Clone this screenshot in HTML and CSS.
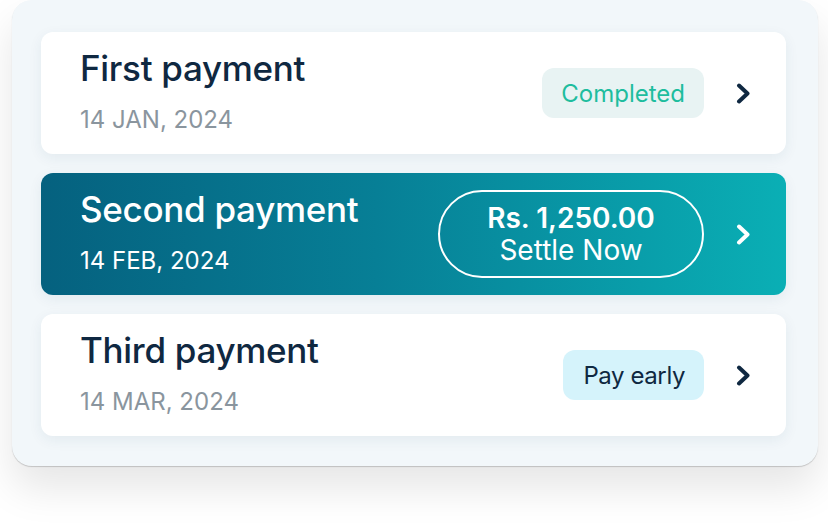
FILE: index.html
```html
<!DOCTYPE html>
<html lang="en">
<head>
<meta charset="utf-8">
<title>Payments</title>
<link rel="stylesheet" href="styles.css">
</head>
<body>
<div class="panel">
  <div class="card">
    <div class="info">
      <div class="title">First payment</div>
      <div class="date">14 JAN, 2024</div>
    </div>
    <div class="actions">
      <span class="badge badge-done">Completed</span>
      <svg class="chev" viewBox="0 0 15 21" width="15" height="21"><path d="M3 2.5l8.5 8-8.5 8" fill="none" stroke="currentColor" stroke-width="4" stroke-linecap="round" stroke-linejoin="round"/></svg>
    </div>
  </div>
  <div class="card card-active">
    <div class="info">
      <div class="title">Second payment</div>
      <div class="date">14 FEB, 2024</div>
    </div>
    <div class="actions">
      <span class="settle"><span class="amount">Rs. 1,250.00</span><span class="settle-label">Settle Now</span></span>
      <svg class="chev" viewBox="0 0 15 21" width="15" height="21"><path d="M3 2.5l8.5 8-8.5 8" fill="none" stroke="currentColor" stroke-width="4" stroke-linecap="round" stroke-linejoin="round"/></svg>
    </div>
  </div>
  <div class="card">
    <div class="info">
      <div class="title">Third payment</div>
      <div class="date">14 MAR, 2024</div>
    </div>
    <div class="actions">
      <span class="badge badge-early">Pay early</span>
      <svg class="chev" viewBox="0 0 15 21" width="15" height="21"><path d="M3 2.5l8.5 8-8.5 8" fill="none" stroke="currentColor" stroke-width="4" stroke-linecap="round" stroke-linejoin="round"/></svg>
    </div>
  </div>
</div>
</body>
</html>
```
FILE: styles.css
```css
html, body {
  margin: 0;
  padding: 0;
  background: #ffffff;
}
body {
  font-family: Inter, "Noto Sans", "Liberation Sans", sans-serif;
  width: 828px;
  height: 524px;
  overflow: hidden;
}
.panel {
  margin-left: 12px;
  width: 806px;
  box-sizing: border-box;
  padding: 32px 32px 30px 29px;
  background: #f2f7fa;
  border-radius: 20px;
  display: flex;
  flex-direction: column;
  gap: 19px;
  box-shadow: 0 1px 1px rgba(0, 0, 0, 0.18), 0 22px 40px rgba(0, 0, 0, 0.10);
}
.card {
  height: 122px;
  background: #ffffff;
  border-radius: 12px;
  display: flex;
  align-items: center;
  justify-content: space-between;
  padding: 0 35px 0 39px;
  box-shadow: 0 4px 14px rgba(30, 70, 100, 0.07);
  color: #0f2841;
}
.card-active {
  background: linear-gradient(90deg, #05617f 0%, #077f96 45%, #0aafb5 100%);
  color: #ffffff;
}
.info {
  display: flex;
  flex-direction: column;
  gap: 16px;
  padding-bottom: 4px;
}
.title {
  font-size: 35px;
  font-weight: 500;
  line-height: 42px;
  letter-spacing: -0.3px;
}
.date {
  font-size: 24px;
  line-height: 30px;
  color: #8a959e;
}
.card-active .date {
  color: #ffffff;
}
.actions {
  display: flex;
  align-items: center;
  gap: 32px;
}
.chev {
  display: block;
}
.badge {
  display: inline-flex;
  align-items: center;
  justify-content: center;
  height: 50px;
  border-radius: 12px;
  font-size: 24px;
  padding: 0 19px;
}
.badge-done {
  background: #e8f3f3;
  color: #1ebd9e;
}
.badge-early {
  background: #d5f3fb;
  color: #0f2841;
  padding: 0 19px 0 20px;
  letter-spacing: -0.4px;
}
.settle {
  display: flex;
  flex-direction: column;
  align-items: center;
  justify-content: center;
  width: 266px;
  height: 88px;
  box-sizing: border-box;
  border: 2px solid #ffffff;
  border-radius: 44px;
  line-height: 32px;
}
.amount {
  font-size: 28px;
  font-weight: 600;
}
.settle-label {
  font-size: 28px;
}
```
